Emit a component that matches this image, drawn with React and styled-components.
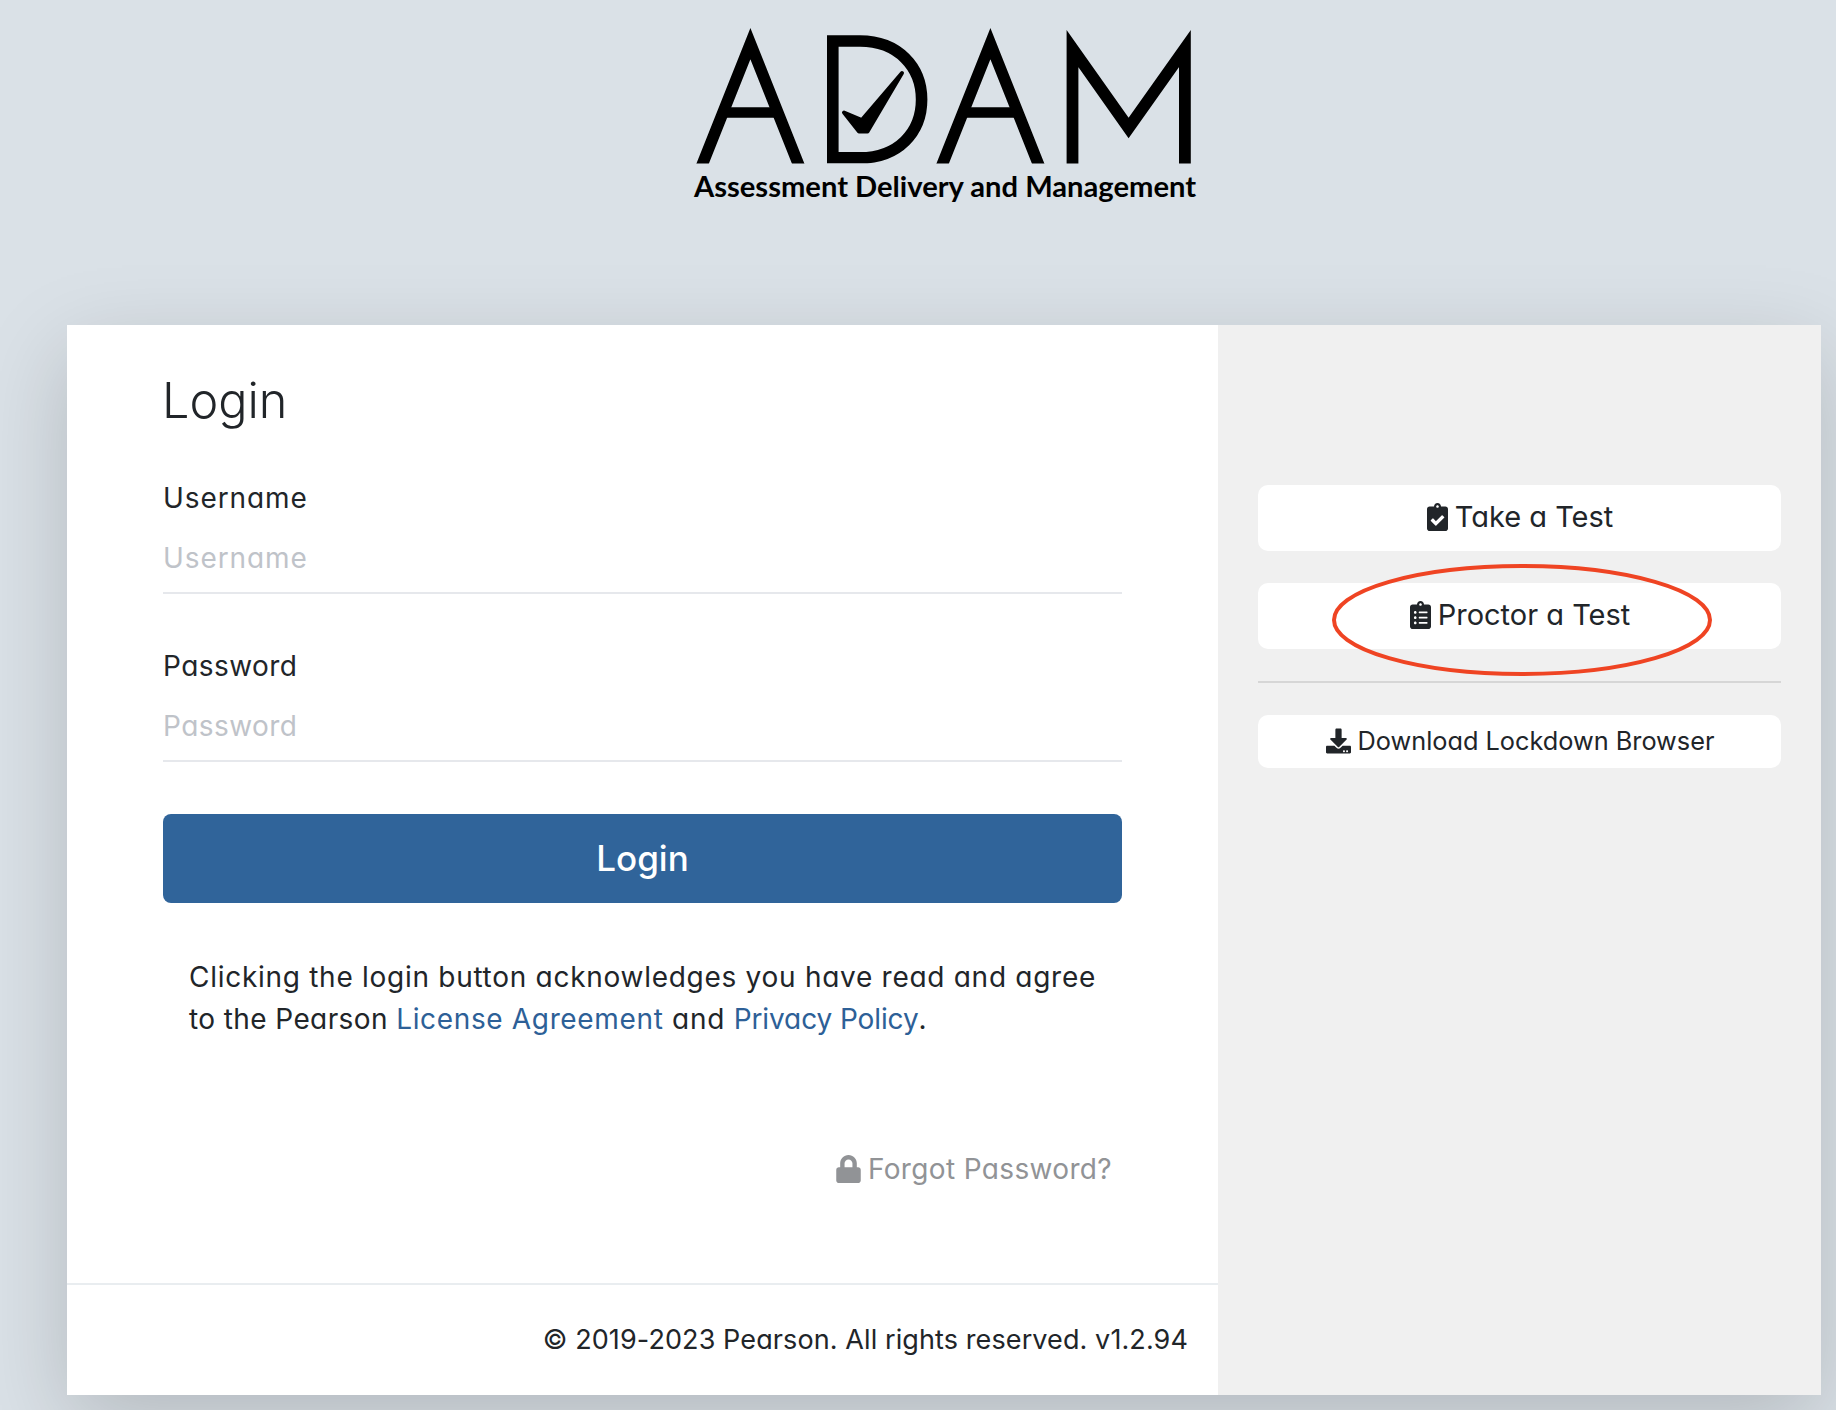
import React from "react";
import styled, { createGlobalStyle } from "styled-components";
import { FaClipboardCheck, FaClipboardList, FaDownload, FaLock } from "react-icons/fa";

const Global = createGlobalStyle`
  html, body { margin: 0; padding: 0; background: #dae1e7; }
  body {
    font-family: Inter, "Open Sans", sans-serif;
    font-feature-settings: "cv11" 1;
    color: #212529;
  }
  * { box-sizing: border-box; }
`;

const Page = styled.div`
  width: 1836px;
  height: 1410px;
  overflow: hidden;
  display: flex;
  flex-direction: column;
  padding: 0 15px 15px 67px;
`;

const Header = styled.header`
  height: 325px;
  padding-top: 2px;
  display: flex;
  flex-direction: column;
  align-items: center;
  flex: none;
`;

const LogoMark = styled.svg`
  display: block;
  width: 560px;
  height: 172px;
  flex: none;
  margin-left: -8px;
`;

const Tagline = styled.div`
  font-family: Lato, sans-serif;
  font-weight: 700;
  font-size: 29.15px;
  line-height: 34px;
  margin-top: -5px;
  margin-left: 2px;
  color: #000;
  white-space: nowrap;
`;

const Card = styled.div`
  flex: 1;
  display: flex;
  background: #fff;
  box-shadow: 0 28px 84px rgba(0, 0, 0, 0.175);
`;

const Main = styled.main`
  width: 1151px;
  flex: none;
  display: flex;
  flex-direction: column;
`;

const Form = styled.div`
  padding: 46px 96px 0;
  display: flex;
  flex-direction: column;
`;

const Title = styled.h1`
  margin: 0 0 46px -1px;
  font-weight: 300;
  font-size: 48.6px;
  line-height: 60px;
`;

const Field = styled.label`
  display: block;
  margin-bottom: ${(p) => p.$gap}px;
`;

const FieldLabel = styled.span`
  display: block;
  font-size: 28px;
  letter-spacing: ${(p) => p.$ls}px;
  line-height: 42px;
`;

const Input = styled.input`
  display: block;
  width: 100%;
  height: 75px;
  border: 0;
  border-bottom: 2px solid #e6e8ec;
  outline: 0;
  padding: 4px 0 0;
  background: transparent;
  font: inherit;
  font-size: 28px;
  letter-spacing: ${(p) => p.$ls}px;
  &::placeholder { color: #bfc3c9; opacity: 1; }
`;

const LoginButton = styled.button`
  display: block;
  width: 100%;
  height: 89px;
  border: 0;
  border-radius: 8px;
  padding: 0 0 2px;
  background: #30649a;
  color: #fff;
  font: inherit;
  font-size: 35px;
  font-weight: 500;
`;

const Notice = styled.p`
  margin: 53px 0 0;
  padding-left: 26px;
  font-size: 28px;
  letter-spacing: 0.72px;
  line-height: 42px;
  font-weight: 400;
  white-space: nowrap;
`;

const Lead = styled.span`
  letter-spacing: 0.4px;
`;

const TextLink = styled.a`
  color: #2d6097;
  text-decoration: none;
  letter-spacing: ${(p) => p.$ls}px;
`;

const Forgot = styled.a`
  margin-top: 108px;
  padding-right: 10px;
  align-self: flex-end;
  display: flex;
  align-items: center;
  gap: 7px;
  color: #919396;
  font-size: 28px;
  letter-spacing: 0.35px;
  line-height: 42px;
  svg { width: 25px; height: 28px; }
`;

const Footer = styled.footer`
  margin-top: auto;
  height: 112px;
  border-top: 2px solid #e9edf0;
  padding: 0 30px 2px 0;
  display: flex;
  align-items: center;
  justify-content: flex-end;
  font-size: 27px;
  letter-spacing: 0.1px;
`;

const Side = styled.aside`
  flex: 1;
  background: #f0f0f0;
  padding: 160px 40px 0;
  display: flex;
  flex-direction: column;
`;

const SideButton = styled.button`
  position: relative;
  width: 100%;
  height: ${(p) => (p.$small ? 53 : 66)}px;
  border: 0;
  border-radius: 10px;
  padding: 0 0 ${(p) => (p.$small ? 2 : 3)}px 1px;
  background: #fff;
  color: #212529;
  font: inherit;
  font-size: ${(p) => (p.$small ? 25.3 : 29)}px;
  display: flex;
  align-items: center;
  justify-content: center;
  gap: 7px;
  margin-bottom: ${(p) => p.$gap || 0}px;
  svg.icon { width: ${(p) => (p.$small ? 25 : 21)}px; height: 28px; flex: none; }
`;

const Rule = styled.hr`
  width: 100%;
  margin: 0 0 32px;
  border: 0;
  border-top: 2px solid #d6d6d6;
`;

const Annotation = styled.svg`
  position: absolute;
  left: 74px;
  top: -19px;
  width: 380px;
  height: 112px;
  pointer-events: none;
`;

function AdamLogo() {
  const letterA = "M37.3 175 L90.4 41.6 L143.5 175";
  return (
    <LogoMark viewBox="0 0 560 172" aria-label="ADAM" role="img">
      <defs>
        <clipPath id="baseline"><rect x="0" y="0" width="560" height="161.6" /></clipPath>
      </defs>
      <g clipPath="url(#baseline)" fill="none" stroke="#000" strokeMiterlimit="12">
        <path d={letterA} strokeWidth="11.6" />
        <path d="M60 110.5 H121" strokeWidth="10.6" />
        <path d="M172.8 39 H200 C238 39 261.6 65 261.6 97.5 C261.6 130.5 238 155.8 200 155.8 H172.8 Z" strokeWidth="11.6" />
        <g transform="translate(240 0)">
          <path d={letterA} strokeWidth="11.6" />
          <path d="M60 110.5 H121" strokeWidth="10.6" />
        </g>
        <path d="M412.5 175 V46.6 L468.6 126 L524.9 46.6 V175" strokeWidth="11.8" />
      </g>
      <path d="M184 110.5 L201.8 118 L242 71 L207.5 129.5 L199 129.5 Z" fill="#000" stroke="#000" strokeWidth="4" strokeLinejoin="round" />
    </LogoMark>
  );
}

export default function App() {
  return (
    <Page>
      <Global />
      <Header>
        <AdamLogo />
        <Tagline>Assessment Delivery and Management</Tagline>
      </Header>
      <Card>
        <Main>
          <Form>
            <Title>Login</Title>
            <Field $gap={51}>
              <FieldLabel $ls={0.9}>Username</FieldLabel>
              <Input $ls={0.9} placeholder="Username" />
            </Field>
            <Field $gap={52}>
              <FieldLabel $ls={0.45}>Password</FieldLabel>
              <Input $ls={0.45} placeholder="Password" type="password" />
            </Field>
            <LoginButton>Login</LoginButton>
            <Notice>
              Clicking the login button acknowledges you have read and agree
              <br />
              <Lead>to the Pearson </Lead>
              <TextLink $ls={0.65}>License Agreement</TextLink> and <TextLink $ls={-0.1}>Privacy Policy</TextLink>.
            </Notice>
            <Forgot><FaLock />Forgot Password?</Forgot>
          </Form>
          <Footer>© 2019-2023 Pearson. All rights reserved. v1.2.94</Footer>
        </Main>
        <Side>
          <SideButton $gap={32}><FaClipboardCheck className="icon" />Take a Test</SideButton>
          <SideButton $gap={32}>
            <FaClipboardList className="icon" />Proctor a Test
            <Annotation viewBox="0 0 380 112">
              <ellipse cx="190" cy="56" rx="188" ry="54" fill="none" stroke="#ef4423" strokeWidth="4" />
            </Annotation>
          </SideButton>
          <Rule />
          <SideButton $small><FaDownload className="icon" />Download Lockdown Browser</SideButton>
        </Side>
      </Card>
    </Page>
  );
}
